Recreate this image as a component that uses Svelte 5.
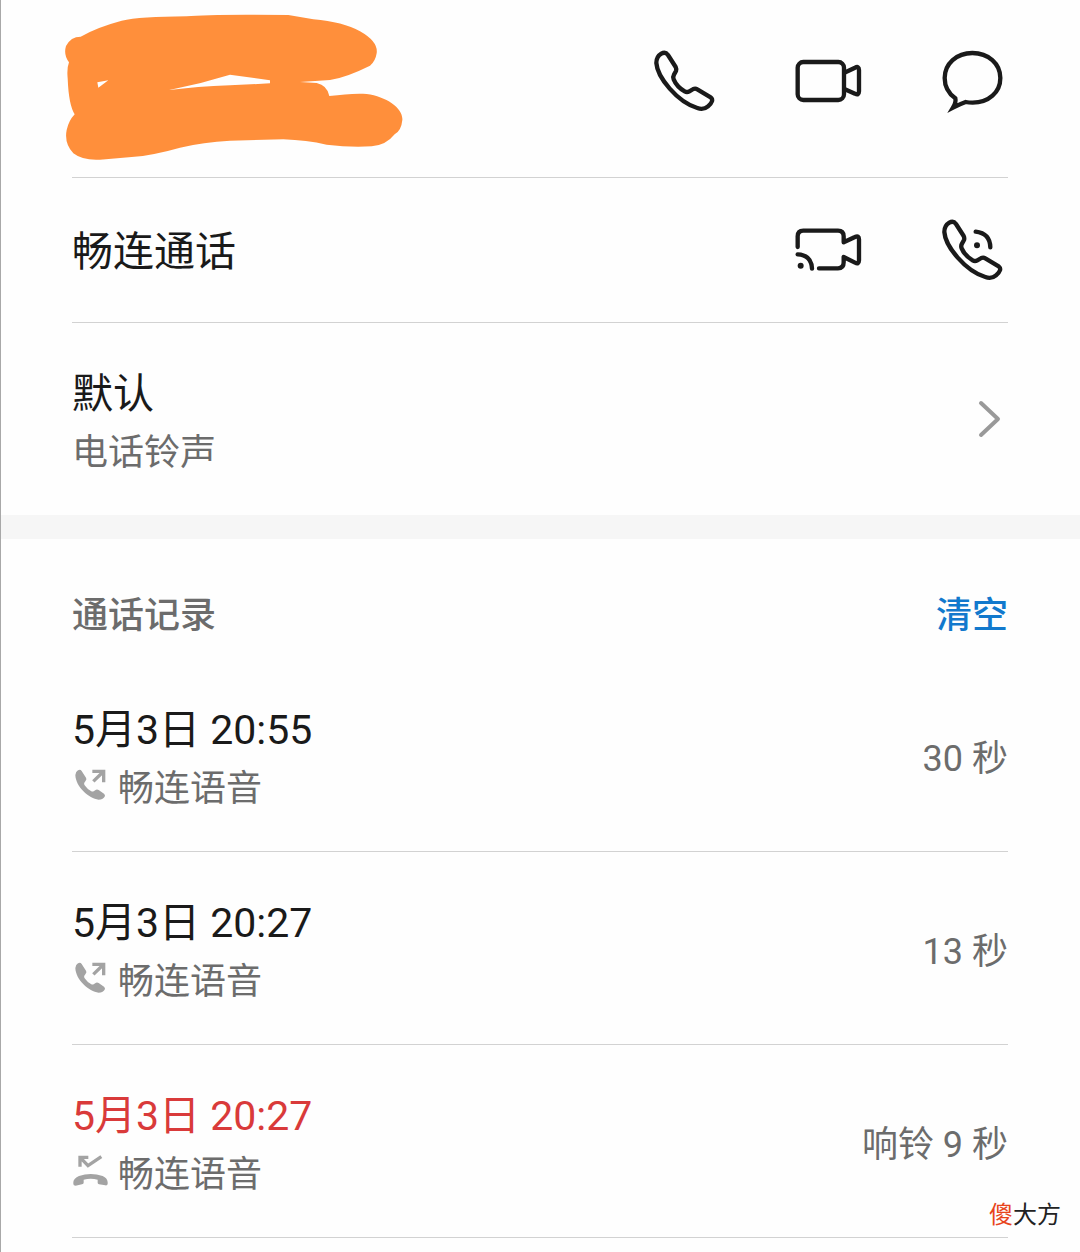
<script lang="ts">
  interface CallRecord {
    time: string;
    type: string;
    duration: string;
    missed: boolean;
  }

  let records: CallRecord[] = $state([
    { time: '5月3日 20:55', type: '畅连语音', duration: '30 秒', missed: false },
    { time: '5月3日 20:27', type: '畅连语音', duration: '13 秒', missed: false },
    { time: '5月3日 20:27', type: '畅连语音', duration: '响铃 9 秒', missed: true }
  ]);

  const HANDSET =
    'M64 71Q49 80 49 99C52 142 112 216 172 234Q190 241 204 229Q224 212 212 202L172 178Q166 174 160 177L148 184Q141 188 134 184Q110 170 101 148Q98 141 102 134L108 123Q110 117 107 111L84 75Q76 64 64 71Z';

  function clearRecords() {
    records = [];
  }
</script>

<main class="page">
  <header class="row contact">
    <svg class="scribble" viewBox="66 0 1014 486" aria-hidden="true">
      <path
        fill="#ff8f3b"
        fill-rule="evenodd"
        d="M92 110Q140 82 215 62Q270 50 410 49Q480 42 715 45L790 58Q880 66 930 94Q985 125 980 160Q976 185 960 197Q890 232 840 240L750 246L800 249Q832 256 838 288C880 284 910 280 950 282C1010 290 1060 325 1057 360Q1054 392 1034 403Q1008 436 965 439Q900 443 830 434Q770 421 700 418L540 422Q460 426 390 443Q310 466 245 471L150 479Q98 482 70 460Q42 430 50 390Q56 362 74 343Q56 315 53 235Q50 205 57 187Q40 165 48 138Q62 110 92 110ZM142 247L145 263L175 241ZM358 270Q450 252 540 224L660 241V250L540 256Q440 260 358 270Z"
      />
    </svg>
    <div class="actions">
      <button type="button" aria-label="拨打电话">
        <svg class="icon" viewBox="24 45 216 216"><path d={HANDSET} /></svg>
      </button>
      <button type="button" aria-label="视频通话">
        <svg class="icon" viewBox="456 45 216 216">
          <rect x="473" y="96" width="139" height="114" rx="17" />
          <path d="M613 128L645 113Q657 107 657 120V184Q657 197 645 191L613 177" />
        </svg>
      </button>
      <button type="button" aria-label="发送信息">
        <svg class="icon" viewBox="888 45 216 216">
          <path
            class="sharp"
            d="M939 233Q949 216 946 205C925 190 914 170 914 144C914 101 950 69 997 69C1045 69 1081 101 1081 144C1081 187 1046 218 998 218Q986 218 977 216Q960 222 939 233Z"
          />
        </svg>
      </button>
    </div>
  </header>

  <section class="row meetime">
    <h2 class="title">畅连通话</h2>
    <div class="actions">
      <button type="button" aria-label="畅连视频">
        <svg class="icon" viewBox="36 27 216 216">
          <path d="M53 126V94Q53 77 70 77H174Q191 77 191 94V112L225 96Q237 90 237 103V166Q237 179 225 173L191 156V172Q191 190 174 190H117" />
          <path d="M53 148Q94 150 96 191" />
          <circle class="dot" cx="62" cy="182" r="9" />
        </svg>
      </button>
      <button type="button" aria-label="畅连语音">
        <svg class="icon" viewBox="24 45 216 216">
          <path d={HANDSET} />
          <path d="M143 98Q186 103 187 145" />
          <circle class="dot" cx="147" cy="139" r="9" />
        </svg>
      </button>
    </div>
  </section>

  <button type="button" class="row entry ringtone">
    <span class="info">
      <span class="title">默认</span>
      <span class="sub">电话铃声</span>
    </span>
    <svg class="chevron" viewBox="0 0 36 42" aria-hidden="true"><path d="M9 1L26 17L9 33" /></svg>
  </button>

  <div class="band"></div>

  <section>
    <div class="row history-head">
      <h2>通话记录</h2>
      <button type="button" class="clear" onclick={clearRecords}>清空</button>
    </div>
    <ul>
      {#each records as record}
        <li class="row entry" class:missed={record.missed}>
          <div class="info">
            <span class="title">{record.time}</span>
            <span class="sub">
              {#if record.missed}
                <svg class="call-type" viewBox="36 51 108 108" aria-hidden="true">
                  <path class="arrow" d="M60 80V52H85M61 53L84 77L124 50" />
                  <path d="M40 126Q41 115 57 108Q92 96 128 108Q142 114 143 127V132Q142 137 136 136L117 133Q113 132 113 128V119Q92 113 71 119V128Q71 132 66 133L47 137Q40 137 40 132Z" />
                </svg>
              {:else}
                <svg class="call-type" viewBox="36 243 108 108" aria-hidden="true">
                  <path class="arrow" d="M97 244H131V277M129 246L100 274" />
                  <path d="M54 241Q61 237 65 243L78 263Q81 268 77 272L73 278Q71 282 74 286Q82 298 94 304Q98 306 102 303L108 299Q112 297 116 300L132 311Q137 315 134 320Q128 329 116 329C87 326 47 290 46 255Q46 246 54 241Z" />
                </svg>
              {/if}
              {record.type}
            </span>
          </div>
          <span class="sub">{record.duration}</span>
        </li>
      {/each}
    </ul>
  </section>

  <div class="watermark"><span>傻</span>大方</div>
</main>

<style>
  :global(body) {
    margin: 0;
    background: #fefefe;
  }

  .page {
    position: relative;
    box-sizing: border-box;
    min-height: 100vh;
    border-left: 1px solid #a8a8a8;
    font-family: Roboto, 'Noto Sans CJK SC', sans-serif;
    color: #1a1a1a;
  }

  h2,
  ul {
    margin: 0;
    padding: 0;
    list-style: none;
  }

  button {
    display: block;
    padding: 0;
    border: 0;
    background: none;
    color: inherit;
    font: inherit;
    text-align: left;
    cursor: pointer;
  }

  .row {
    display: flex;
    align-items: center;
    justify-content: space-between;
    margin: 0 72px 0 71px;
    border-bottom: 1px solid #d2d2d2;
  }

  .contact {
    padding-bottom: 15px;
  }

  .scribble {
    display: block;
    width: 338px;
    height: 162px;
    overflow: visible;
  }

  .actions {
    display: flex;
    gap: 72px;
  }

  .icon {
    display: block;
    width: 72px;
    height: 72px;
    fill: none;
    stroke: #1a1a1a;
    stroke-width: 13;
    stroke-linecap: round;
    stroke-linejoin: round;
  }

  .sharp {
    stroke-linejoin: miter;
  }

  .dot {
    fill: #1a1a1a;
    stroke: none;
  }

  .meetime {
    padding: 36px 0;
  }

  .title {
    font-size: 41px;
    font-weight: 400;
    line-height: 60px;
  }

  .meetime .title {
    padding-top: 4px;
  }

  .sub {
    display: flex;
    align-items: center;
    gap: 10px;
    font-size: 36px;
    line-height: 58px;
    color: #6c6c6c;
  }

  .entry {
    padding: 41px 0 33px;
  }

  .info {
    display: flex;
    flex-direction: column;
  }

  .ringtone {
    width: calc(100% - 143px);
    border-bottom: 0;
  }

  .chevron {
    width: 36px;
    height: 42px;
    overflow: visible;
    fill: none;
    stroke: #999;
    stroke-width: 4;
    stroke-linecap: round;
    stroke-linejoin: round;
  }

  .band {
    height: 24px;
    background: #f6f6f6;
  }

  .history-head {
    padding: 48px 0 14px;
    border-bottom: 0;
    font-size: 36px;
    line-height: 58px;
    color: #6c6c6c;
  }

  .history-head h2 {
    font-size: 36px;
    font-weight: 500;
  }

  .clear {
    font-weight: 500;
    color: #1279cd;
  }

  .missed .title {
    color: #d93a3a;
  }

  .call-type {
    width: 36px;
    height: 36px;
    overflow: visible;
    fill: #a3a3a3;
  }

  .arrow {
    fill: none;
    stroke: #a3a3a3;
    stroke-width: 10;
  }

  .watermark {
    position: absolute;
    right: 19px;
    bottom: 19px;
    font-size: 24px;
    line-height: 36px;
    color: #222;
  }

  .watermark span {
    color: #e8451c;
  }
</style>
